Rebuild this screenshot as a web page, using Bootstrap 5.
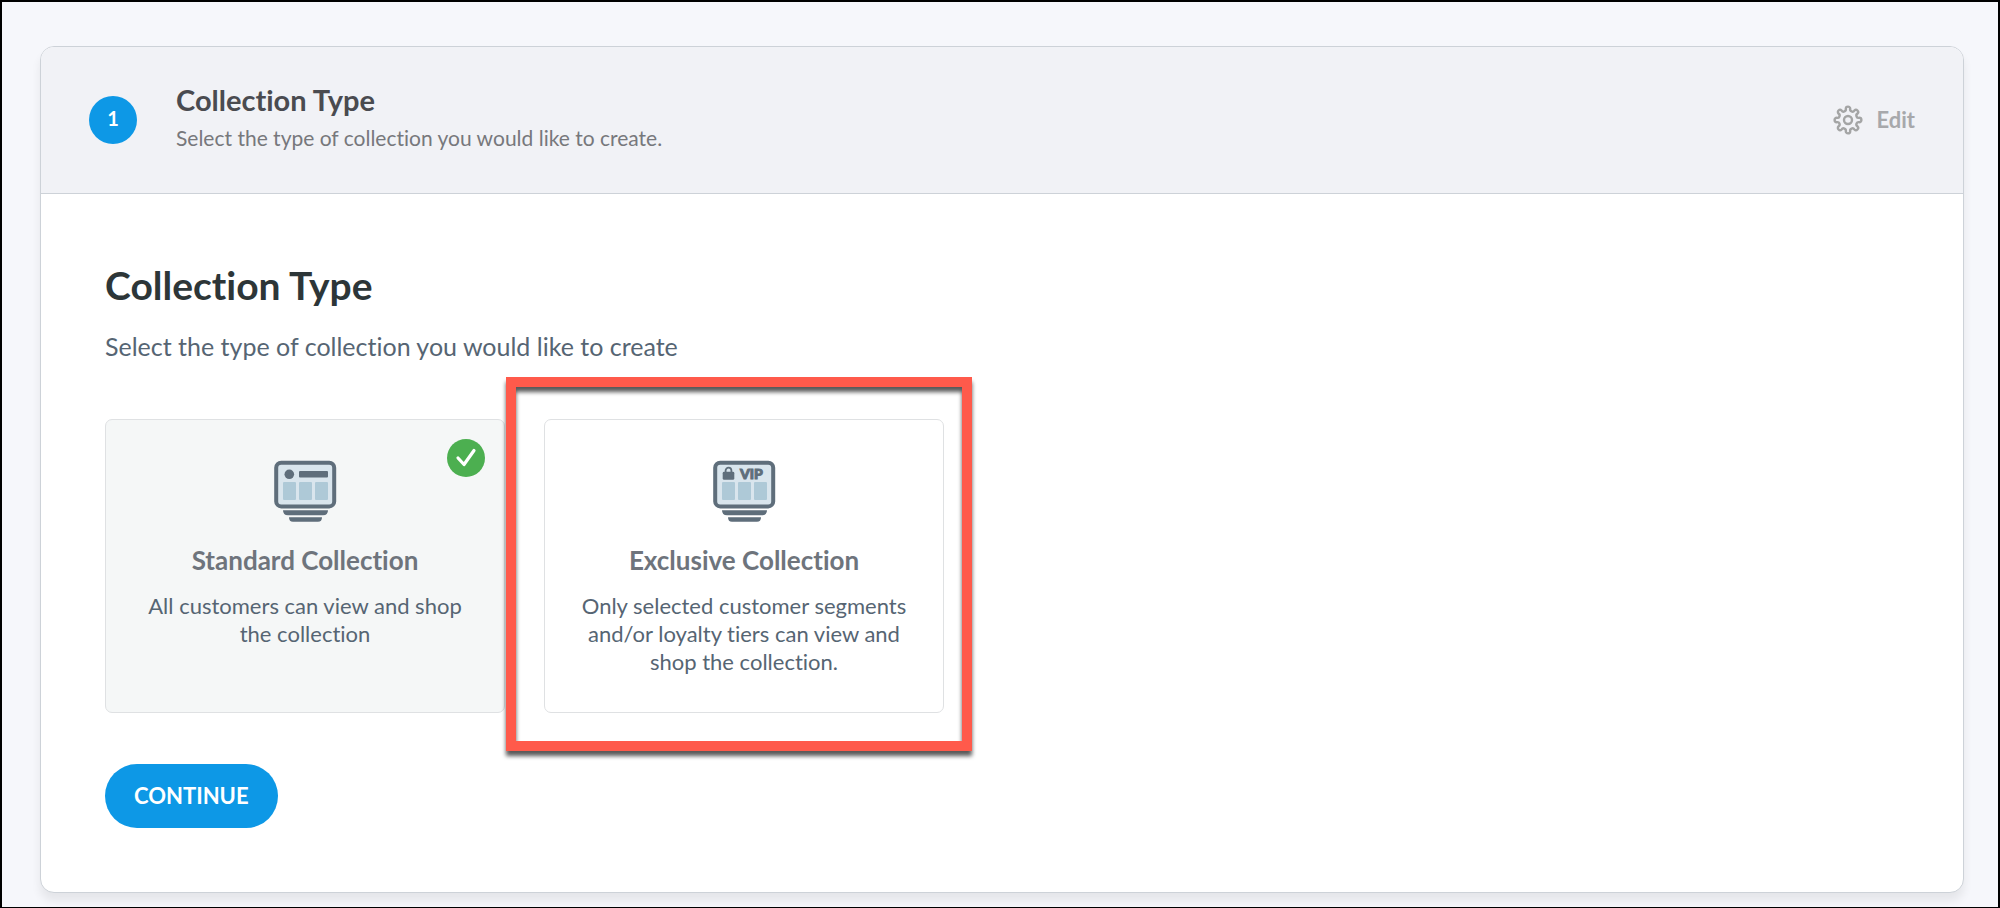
<!DOCTYPE html>
<html lang="en">
<head>
<meta charset="utf-8">
<meta name="viewport" content="width=device-width, initial-scale=1">
<title>Collection Type</title>
<link href="https://cdn.jsdelivr.net/npm/bootstrap@5.3.0/dist/css/bootstrap.min.css" rel="stylesheet">
<style>
  body { font-family: Lato, "Open Sans", sans-serif; font-variant-ligatures: none; background: #f6f7fb; color: #566573; }
  .page-frame { border: 2px solid #000; padding: 44px 34px 14px 38px; }
  .step-panel { border: 1px solid #cdd2d8; border-radius: 14px; box-shadow: 0 8px 10px rgba(0,0,0,.07); overflow: hidden; }
  .step-header { background: #f1f2f6; border-bottom: 1px solid #cdd2d8; padding: 35px 48px; border-radius: 0; }
  .step-number { width: 48px; height: 48px; background: #0d98e6; font-size: 20px; line-height: 24px; padding-bottom: 4px; }
  .step-text { margin-left: 39px; padding-bottom: 6px; }
  .step-title { font-size: 29px; line-height: 36px; color: #4a4b50; margin-bottom: 6px; }
  .step-note { font-size: 21px; line-height: 28px; color: #77787c; }
  .edit-btn { color: #a7a8ab; font-size: 22px; line-height: 30px; gap: 13px; }
  .step-body { padding: 67px 64px 64px; }
  .section-title { font-size: 39px; line-height: 48px; color: #2d3638; margin-bottom: 18px; }
  .section-note { font-size: 25px; line-height: 38px; margin-bottom: 54px; }
  .choices { gap: 39px; margin-bottom: 51px; }
  .choice { width: 400px; }
  .choice-card { border: 1px solid #dfe1e3; border-radius: 7px; padding: 40px 32px 36px; cursor: pointer; }
  .btn-check:checked + .choice-card { background: #f5f7f7; }
  .choice-check { top: 19px; right: 19px; display: none; }
  .btn-check:checked + .choice-card .choice-check { display: block; }
  .choice-icon { margin-bottom: 20px; }
  .choice-title { font-size: 26px; line-height: 32px; color: #6e747c; margin-bottom: 16px; }
  .choice-note { font-size: 22px; line-height: 28px; }
  .callout-frame { inset: -42px -28px -38px -38px; border: 10px solid #ff5a4b; filter: drop-shadow(0 5px 2px rgba(0,0,0,.65)); pointer-events: none; z-index: 2; }
  .continue-btn { background: #0d98e6; color: #fff; font-size: 22px; line-height: 32px; padding: 15px 28px; }
  .continue-btn:hover { background: #0b86cb; color: #fff; }
</style>
</head>
<body>
<svg width="0" height="0" class="position-absolute" aria-hidden="true">
  <defs>
    <g id="collection-screen">
      <rect x="3.2" y="2.8" width="58" height="43.6" rx="5" fill="#d9e5ed" stroke="#5f6e7b" stroke-width="4"/>
      <g fill="#aec9d7">
        <rect x="10" y="22" width="13" height="18" rx="1"/>
        <rect x="26" y="22" width="13" height="18" rx="1"/>
        <rect x="42" y="22" width="13" height="18" rx="1"/>
      </g>
      <path d="M10 50.3H55Q55 55.3 50 55.3H15Q10 55.3 10 50.3ZM16 57.2H49Q49 61.8 45 61.8H20Q16 61.8 16 57.2Z" fill="#5f6e7b"/>
    </g>
  </defs>
</svg>
<div class="page-frame min-vh-100">
  <main class="card step-panel">
    <header class="card-header step-header d-flex align-items-center">
      <span class="step-number rounded-circle text-white fw-bold d-flex align-items-center justify-content-center flex-shrink-0">1</span>
      <div class="step-text">
        <h2 class="step-title fw-bold">Collection Type</h2>
        <p class="step-note mb-0">Select the type of collection you would like to create.</p>
      </div>
      <button type="button" class="btn edit-btn border-0 p-0 fw-bold d-flex align-items-center ms-auto">
        <svg width="30" height="30" viewBox="-15 -15 30 30" fill="none" stroke="#a4a5a5" stroke-width="2.4" aria-hidden="true">
          <path d="M-2.2-11.2A2.2 2.2 0 0 1 2.2-11.2A2.28 2.28 0 0 0 6.36-9.48A2.2 2.2 0 0 1 9.48-6.36A2.28 2.28 0 0 0 11.2-2.2A2.2 2.2 0 0 1 11.2 2.2A2.28 2.28 0 0 0 9.48 6.36A2.2 2.2 0 0 1 6.36 9.48A2.28 2.28 0 0 0 2.2 11.2A2.2 2.2 0 0 1-2.2 11.2A2.28 2.28 0 0 0-6.36 9.48A2.2 2.2 0 0 1-9.48 6.36A2.28 2.28 0 0 0-11.2 2.2A2.2 2.2 0 0 1-11.2-2.2A2.28 2.28 0 0 0-9.48-6.36A2.2 2.2 0 0 1-6.36-9.48A2.28 2.28 0 0 0-2.2-11.2Z"/>
          <circle r="4"/>
        </svg>
        Edit
      </button>
    </header>
    <form class="step-body">
      <h1 class="section-title fw-bold">Collection Type</h1>
      <p class="section-note">Select the type of collection you would like to create</p>
      <div class="choices d-flex flex-wrap">
        <div class="choice d-flex">
          <input class="btn-check" type="radio" name="collection" id="standard" checked>
          <label class="choice-card position-relative w-100 text-center" for="standard">
            <svg class="choice-check position-absolute" width="38" height="38" aria-hidden="true">
              <circle cx="19" cy="19" r="19" fill="#4caf50"/>
              <path d="M11 19L17 25.5L27 11.5" fill="none" stroke="#fff" stroke-width="3.2" stroke-linecap="round" stroke-linejoin="round"/>
            </svg>
            <svg class="choice-icon d-block mx-auto" width="64" height="64" aria-hidden="true">
              <use href="#collection-screen"/>
              <circle cx="16.3" cy="14.3" r="4.8" fill="#5f6e7b"/>
              <rect x="26" y="11" width="29" height="6.6" rx="1" fill="#5f6e7b"/>
            </svg>
            <span class="choice-title fw-bold d-block">Standard Collection</span>
            <span class="choice-note d-block">All customers can view and shop the collection</span>
          </label>
        </div>
        <div class="choice d-flex position-relative">
          <input class="btn-check" type="radio" name="collection" id="exclusive">
          <label class="choice-card position-relative w-100 text-center" for="exclusive">
            <svg class="choice-check position-absolute" width="38" height="38" aria-hidden="true">
              <circle cx="19" cy="19" r="19" fill="#4caf50"/>
              <path d="M11 19L17 25.5L27 11.5" fill="none" stroke="#fff" stroke-width="3.2" stroke-linecap="round" stroke-linejoin="round"/>
            </svg>
            <svg class="choice-icon d-block mx-auto" width="64" height="64" aria-hidden="true">
              <use href="#collection-screen"/>
              <rect x="10.7" y="11.8" width="11.6" height="8" rx="1.4" fill="#5f6e7b"/>
              <path d="M13.6 13V10.6a2.9 2.9 0 0 1 5.8 0V13" fill="none" stroke="#5f6e7b" stroke-width="1.8"/>
              <text x="28" y="19" font-family="Lato, sans-serif" font-size="14" font-weight="900" fill="#5f6e7b" stroke="#5f6e7b" stroke-width="1">VIP</text>
            </svg>
            <span class="choice-title fw-bold d-block">Exclusive Collection</span>
            <span class="choice-note d-block">Only selected customer segments and/or loyalty tiers can view and shop the collection.</span>
          </label>
          <div class="callout-frame position-absolute"></div>
        </div>
      </div>
      <button type="button" class="btn continue-btn rounded-pill fw-bold">CONTINUE</button>
    </form>
  </main>
</div>
<script src="https://cdn.jsdelivr.net/npm/bootstrap@5.3.0/dist/js/bootstrap.bundle.min.js"></script>
</body>
</html>
